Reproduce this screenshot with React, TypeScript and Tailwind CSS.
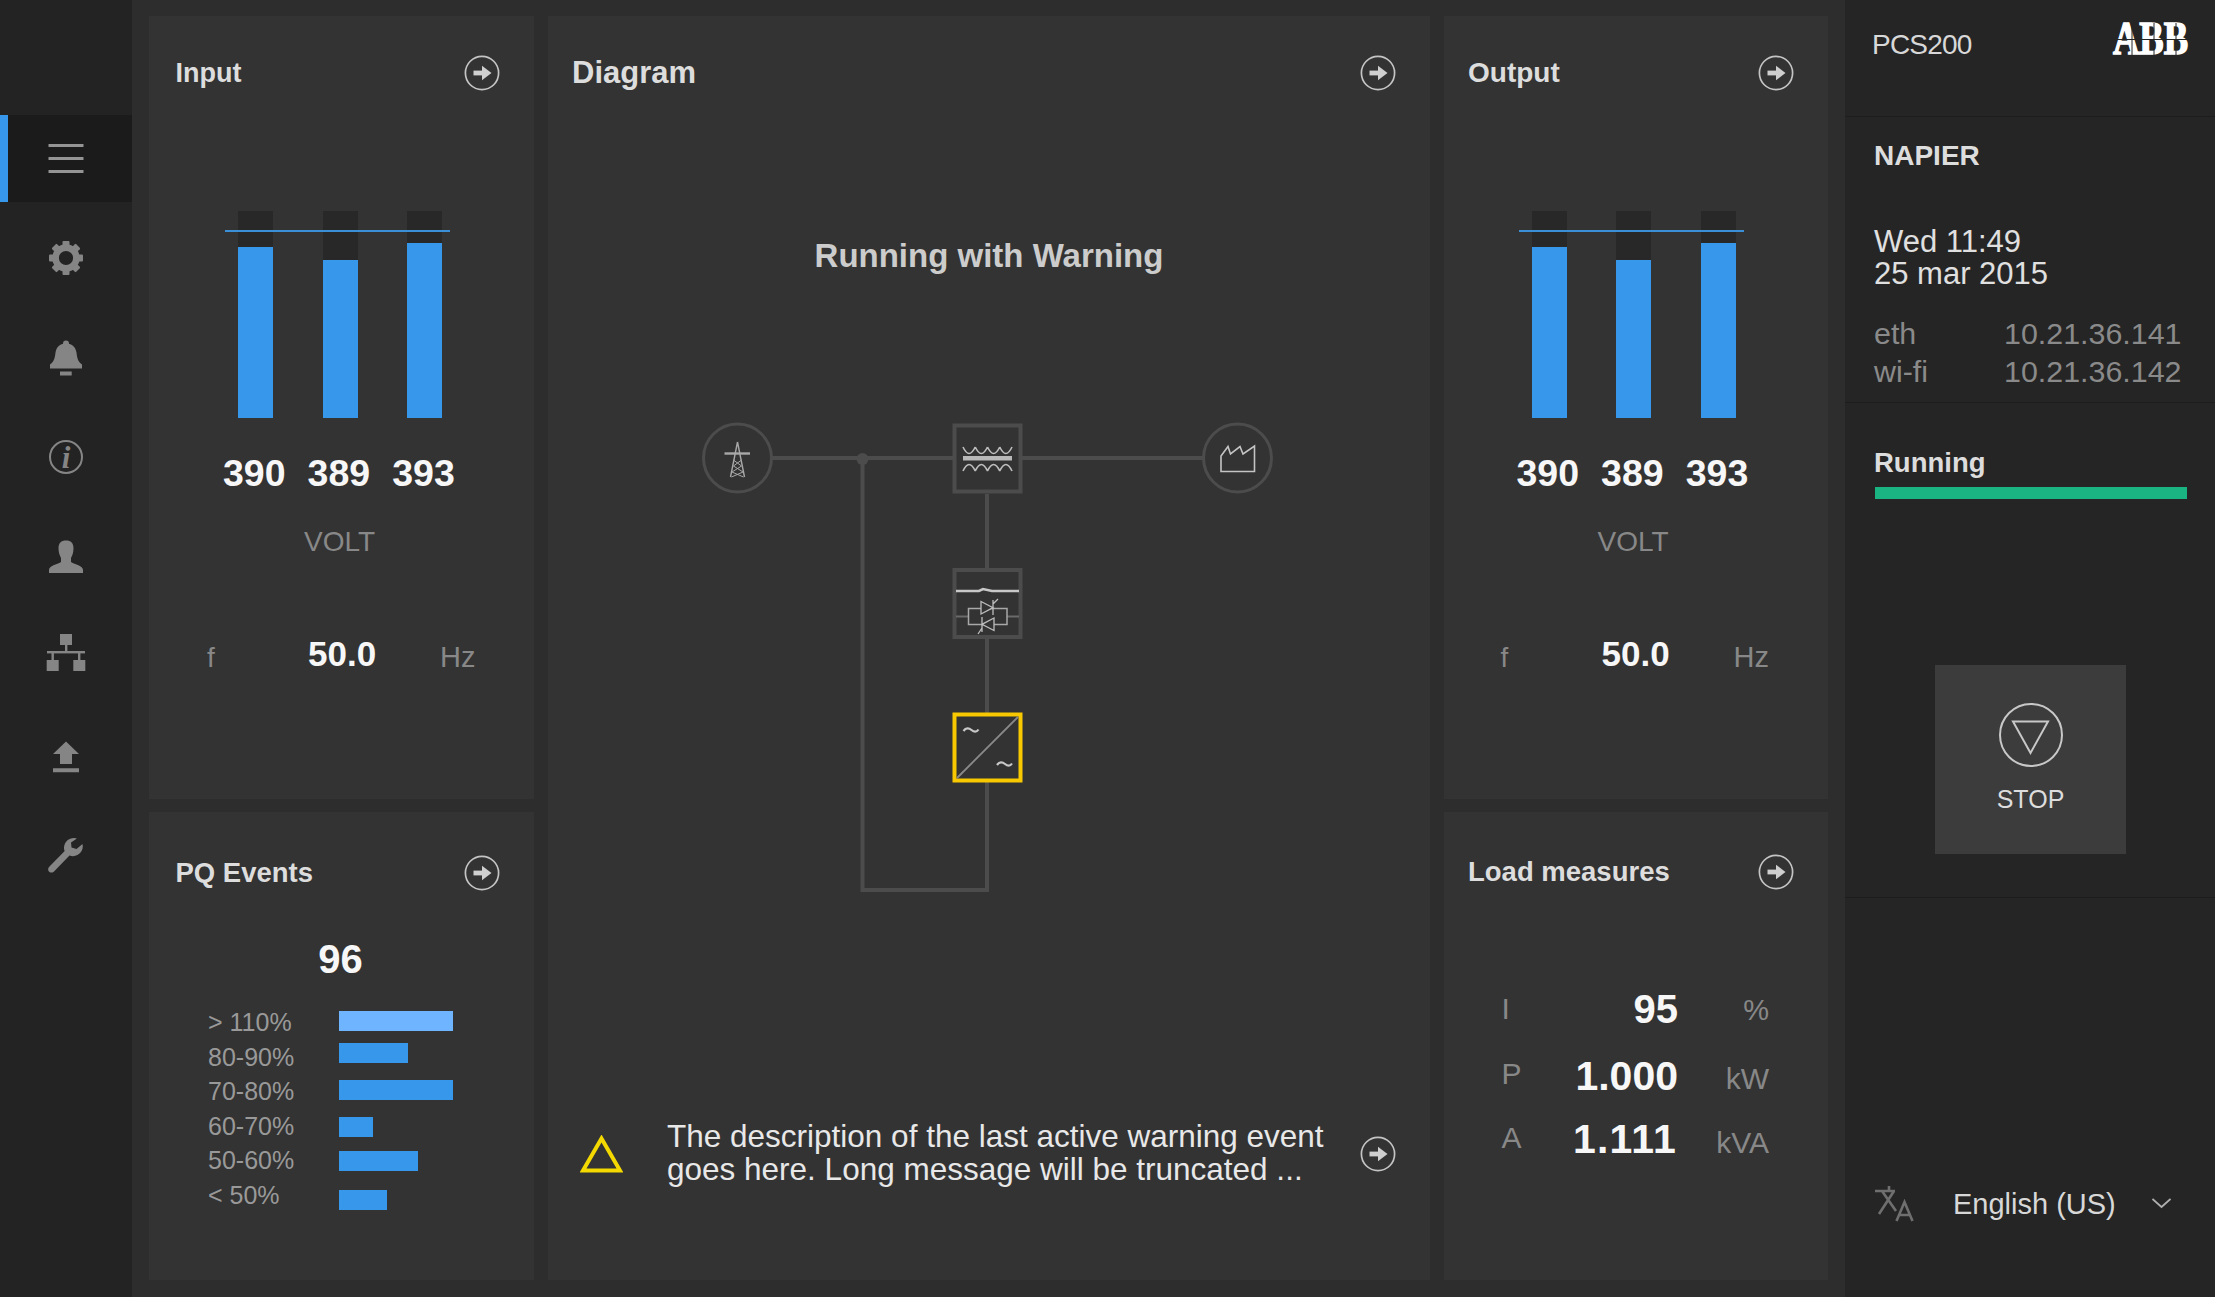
import React from "react";

function ArrowIcon() {
  return (
    <svg width="36" height="36" viewBox="0 0 36 36" className="shrink-0">
      <circle cx="18" cy="18" r="16.6" fill="none" stroke="#c4c4c4" strokeWidth="1.7" />
      <rect x="9.5" y="15.6" width="9" height="4.8" fill="#cfcfcf" />
      <polygon points="18,10.8 27.5,18 18,25.2" fill="#cfcfcf" />
    </svg>
  );
}

function Panel({ title, titleClass, children, className }: { title: string; titleClass: string; children: React.ReactNode; className: string }) {
  return (
    <section className={"flex flex-col bg-[#333333] " + className}>
      <header className="flex items-center justify-between pr-[34px] h-9 shrink-0">
        <h2 className={"font-bold text-[#dddddd] leading-9 " + titleClass}>{title}</h2>
        <ArrowIcon />
      </header>
      {children}
    </section>
  );
}

function Voltage({ className }: { className: string }) {
  const bars = [171, 158, 175];
  const values = ["390", "389", "393"];
  return (
    <div className={"flex flex-col " + className}>
      <div className="relative mt-[120px] ml-[89px] w-[204px] h-[207px] flex gap-[49.5px]">
        {bars.map((h, i) => (
          <div key={i} className="w-[35px] h-full bg-[#282828] flex flex-col justify-end">
            <div className="bg-[#3797ea] w-full" style={{ height: h }} />
          </div>
        ))}
        <div className="absolute left-[-13px] top-[19px] w-[225px] h-[2px] bg-[#3b8fd6]" />
      </div>
      <div className="flex ml-[63px] mt-[35px]">
        {values.map((v) => (
          <div key={v} className="w-[84.6px] text-center text-[37.5px] leading-10 font-bold text-[#f7f7f7]">{v}</div>
        ))}
      </div>
      <div className="ml-[63px] w-[255px] mt-[33px] text-center text-[28px] leading-8 text-[#888888]">VOLT</div>
      <div className="flex items-baseline ml-[58px] mt-[81px] leading-8">
        <span className="w-[101px] text-[28px] text-[#888888]">f</span>
        <span className="w-[132px] text-[35px] font-bold text-[#f7f7f7] -translate-y-px">50.0</span>
        <span className="text-[29px] text-[#888888]">Hz</span>
      </div>
    </div>
  );
}

const pqRows = [
  { label: "> 110%", w: "w-[114px]", mt: "mt-0", color: "bg-[#6eb4ff]" },
  { label: "80-90%", w: "w-[69px]", mt: "mt-[12px]", color: "bg-[#3797ea]" },
  { label: "70-80%", w: "w-[114px]", mt: "mt-[17px]", color: "bg-[#3797ea]" },
  { label: "60-70%", w: "w-[34px]", mt: "mt-[17px]", color: "bg-[#3797ea]" },
  { label: "50-60%", w: "w-[79px]", mt: "mt-[14px]", color: "bg-[#3797ea]" },
  { label: "< 50%", w: "w-[48px]", mt: "mt-[19px]", color: "bg-[#3797ea]" },
];

function Tower() {
  return (
    <g fill="none" stroke="#a8a8a8" strokeWidth="1.2">
      <path d="M724.5 453.5H750" strokeWidth="2.4" />
      <path d="M737.5 442L730.5 477M737.5 442L744.5 477" strokeWidth="1.4" />
      <path d="M733.5 460L741.5 466L732 472L743.5 477M741.5 460L733.5 466L743 472L731.5 477" strokeWidth="1" />
    </g>
  );
}

function Coils({ y, up }: { y: number; up: boolean }) {
  const xs = [963, 975.25, 987.5, 999.75];
  const d = xs.map((x) => `M${x} ${y}Q${x + 6.1} ${y + (up ? -13 : 13)} ${x + 12.25} ${y}`).join("");
  return <path d={d} fill="none" stroke="#bdbdbd" strokeWidth="1.6" />;
}

function Diagram() {
  const wire = "#4c4c4c";
  return (
    <svg width="580" height="475" viewBox="700 420 580 475" className="ml-[152px] mt-[144px] shrink-0">
      <g fill="none" stroke={wire} strokeWidth="4">
        <path d="M772 458H1203" />
        <path d="M862.5 458V890H987V494" />
      </g>
      <circle cx="862.5" cy="459" r="6" fill={wire} />
      <circle cx="737.5" cy="458" r="34" fill="#333333" stroke={wire} strokeWidth="3" />
      <circle cx="1237.5" cy="458" r="34" fill="#333333" stroke={wire} strokeWidth="3" />
      <Tower />
      <path d="M1221 471.5V456L1228 446.5L1230.5 454L1240 446.5L1243 454L1254.5 446V471.5Z" fill="none" stroke="#c4c4c4" strokeWidth="1.6" />

      <rect x="954.5" y="425.5" width="66" height="66" fill="#333333" stroke={wire} strokeWidth="4" />
      <Coils y={447} up={false} />
      <rect x="963" y="456" width="49" height="4.5" fill="#b8b8b8" />
      <Coils y={471} up={true} />

      <rect x="954.5" y="570" width="66" height="67" fill="#333333" stroke={wire} strokeWidth="4" />
      <path d="M956 591H979L983 589L992 591H1019" fill="none" stroke="#c8c8c8" strokeWidth="2.6" />
      <path d="M956 616.5H968M1007 616.5H1019" stroke="#6a6a6a" strokeWidth="2" />
      <rect x="968.5" y="608.5" width="38.5" height="16" fill="none" stroke="#a8a8a8" strokeWidth="1.5" />
      <path d="M981 601.5V614L993 607.7ZM993 600V615M993 604L998 599" fill="#333333" stroke="#bdbdbd" strokeWidth="1.3" />
      <path d="M994 618V630.5L982 624.3ZM982 617V632M982 628L978 634" fill="#333333" stroke="#bdbdbd" strokeWidth="1.3" />

      <rect x="954.5" y="714.5" width="66" height="66" fill="#333333" stroke="#f8c800" strokeWidth="4" />
      <path d="M957 778L1018 717" stroke="#8a8a8a" strokeWidth="1.8" />
      <path d="M963.5 731C966 727.5 969 728 971.5 730C974 732 976.5 732.5 978.5 729.5" fill="none" stroke="#c8c8c8" strokeWidth="2.2" />
      <path d="M997 765C999.5 761.5 1002.5 762 1005 764C1007.5 766 1010 766.5 1012 763.5" fill="none" stroke="#c8c8c8" strokeWidth="2.2" />
    </svg>
  );
}

const c = "#858585";
const navIcons: React.ReactNode[] = [
  <svg key="m" width="48" height="48" viewBox="42 134.5 48 48">
    <path d="M48.5 145H83.5M48.5 158H83.5M48.5 171H83.5" stroke="#949494" strokeWidth="3" />
  </svg>,
  <svg key="g" width="48" height="48" viewBox="42 234 48 48">
    <circle cx="66" cy="258" r="10.4" fill="none" stroke={c} strokeWidth="6.6" />
    <g fill={c}>
      {[0, 45, 90, 135, 180, 225, 270, 315].map((a) => (
        <rect key={a} x="62.5" y="241" width="7" height="6" rx="1" transform={`rotate(${a} 66 258)`} />
      ))}
    </g>
  </svg>,
  <svg key="b" width="48" height="48" viewBox="42 333.5 48 48">
    <g fill={c}>
      <circle cx="66" cy="343" r="3" />
      <path d="M50 364V368H82V364C77.5 361 77 356 76.5 352C75.5 346 71.5 343 66 343C60.5 343 56.5 346 55.5 352C55 356 54.5 361 50 364Z" />
      <rect x="60" y="371" width="11.7" height="4" />
    </g>
  </svg>,
  <svg key="i" width="48" height="48" viewBox="42 433 48 48">
    <circle cx="66" cy="457" r="16" fill="none" stroke={c} strokeWidth="2" />
    <text x="66" y="467.5" textAnchor="middle" fontFamily="'Liberation Serif', serif" fontStyle="italic" fontWeight="700" fontSize="31" fill={c}>i</text>
  </svg>,
  <svg key="u" width="48" height="48" viewBox="42 532.5 48 48">
    <path d="M58.5 548C58.5 542.5 61 540 66 540C71 540 73.5 542.5 73.5 548C73.5 552.5 72 555.5 71 557.5V561.5C75 564 83 565 83 569.5V572.5H49V569.5C49 565 57 564 61 561.5V557.5C60 555.5 58.5 552.5 58.5 548Z" fill={c} />
  </svg>,
  <svg key="s" width="48" height="48" viewBox="42 632 48 48">
    <g fill={c}>
      <rect x="60" y="634" width="12" height="11" />
      <rect x="46.7" y="660" width="12" height="11" />
      <rect x="73.3" y="660" width="12" height="11" />
      <rect x="47" y="651" width="38" height="2.4" />
      <rect x="65" y="645" width="2.4" height="7" />
      <rect x="51.5" y="652" width="2.4" height="9" />
      <rect x="78" y="652" width="2.4" height="9" />
    </g>
  </svg>,
  <svg key="up" width="48" height="48" viewBox="42 731.5 48 48">
    <path d="M66 741L79 753.5H72V763.5H60V753.5H53Z M53 767.7H79V771.7H53Z" fill={c} />
  </svg>,
  <svg key="w" width="48" height="48" viewBox="42 831 48 48">
    <path d="M77 838.5C71 836.5 64.5 840.5 64 847.5C64 849 64.2 850 64.7 851L49.5 866.5C47.5 868.5 48 871 49.5 872C51 873 53 872.8 54.5 871L69.5 855.5C70.5 856 72 856.2 73 856.2C79.5 856 84 850 82.5 844L76.5 849L71.5 847.5L71 842.5Z" fill={c} />
  </svg>,
];

export default function App() {
  return (
    <div className="flex w-[2215px] h-[1297px] overflow-hidden bg-[#2d2d2d] font-['Liberation_Sans',Arial,sans-serif]">
      <nav className="w-[132px] shrink-0 bg-[#232323] pt-[115px] flex flex-col gap-[12.5px]">
        {navIcons.map((icon, i) => (
          <div key={i} className={"relative h-[87px] flex items-center justify-center " + (i === 0 ? "bg-[#1b1b1b]" : "")}>
            {i === 0 && <span className="absolute left-0 top-0 bottom-0 w-2 bg-[#3797ea]" />}
            {icon}
          </div>
        ))}
      </nav>

      <main className="flex-1 flex gap-[14px] pl-[17px] pr-[17px] pt-4 pb-[17px]">
        <div className="w-[385px] flex flex-col gap-[13px]">
          <Panel title="Input" titleClass="text-[27px] ml-[26.5px]" className="h-[783px] pt-[39px]">
            <Voltage className="" />
          </Panel>
          <Panel title="PQ Events" titleClass="text-[27.5px] ml-[26.5px]" className="flex-1 pt-[43px]">
            <div className="mt-[44px] ml-[64px] w-[255px] text-center text-[40px] leading-[48px] font-bold text-[#f7f7f7]">96</div>
            <div className="flex mt-[22px] ml-[59px]">
              <div className="w-[130.6px] text-[25px] leading-[34.6px] text-[#999999]">
                {pqRows.map((r) => (
                  <div key={r.label}>{r.label}</div>
                ))}
              </div>
              <div className="pt-[6px]">
                {pqRows.map((r) => (
                  <div key={r.label} className={"h-5 " + r.w + " " + r.mt + " " + r.color} />
                ))}
              </div>
            </div>
          </Panel>
        </div>

        <Panel title="Diagram" titleClass="text-[31px] ml-6" className="w-[882px] pt-[39px] relative">
          <div className="mt-[145px] text-center text-[33px] leading-10 font-bold text-[#cccccc]">Running with Warning</div>
          <Diagram />
          <div className="mt-auto mb-[93px] flex items-center h-[66px] pl-8 pr-[34px]">
            <svg width="43" height="38" viewBox="0 0 43 38" className="shrink-0">
              <polygon points="21.5,3.5 40,35.5 3,35.5" fill="none" stroke="#f4d900" strokeWidth="4" />
            </svg>
            <p className="ml-[44px] -translate-y-[1.5px] text-[31.5px] leading-[33px] text-[#e8e8e8] whitespace-nowrap">
              The description of the last active warning event
              <br />
              goes here. Long message will be truncated ...
            </p>
            <div className="ml-auto">
              <ArrowIcon />
            </div>
          </div>
        </Panel>

        <div className="w-[384px] flex flex-col gap-[13px]">
          <Panel title="Output" titleClass="text-[28px] ml-6" className="h-[783px] pt-[39px]">
            <Voltage className="-ml-[1.5px]" />
          </Panel>
          <Panel title="Load measures" titleClass="text-[27.5px] ml-6" className="flex-1 pt-[42px]">
            <div className="mt-[97px] ml-[57.5px] w-[267.5px] flex flex-col gap-[19px]">
              <div className="flex items-baseline h-11 leading-[44px]">
                <span className="w-10 text-[30px] text-[#888888] -translate-y-[4px]">I</span>
                <span className="flex-1 text-right text-[40px] font-bold text-[#f7f7f7]">95</span>
                <span className="w-[91px] text-right text-[29px] text-[#888888] -translate-y-[3px]">%</span>
              </div>
              <div className="flex items-baseline h-11 leading-[44px] mt-[4px]">
                <span className="w-10 text-[30px] text-[#888888] -translate-y-[6px]">P</span>
                <span className="flex-1 text-right text-[41px] font-bold text-[#f7f7f7]">1.000</span>
                <span className="w-[91px] text-right text-[30px] text-[#888888] -translate-y-px">kW</span>
              </div>
              <div className="flex items-baseline h-11 leading-[44px]">
                <span className="w-10 text-[30px] text-[#888888] -translate-y-[5px]">A</span>
                <span className="flex-1 text-right text-[41px] font-bold tracking-[1.2px] pr-px text-[#f7f7f7]">1.111</span>
                <span className="w-[91px] text-right text-[30px] text-[#888888]">kVA</span>
              </div>
            </div>
          </Panel>
        </div>
      </main>

      <aside className="w-[370px] shrink-0 bg-[#252525] flex flex-col">
        <div className="h-[117px] border-b border-[#1d1d1d] flex justify-between pl-[27px] pr-[26px]">
          <div className="pt-[29px] text-[28px] leading-8 tracking-[-0.8px] text-[#d8d8d8]">PCS200</div>
          <svg width="77" height="54" viewBox="0 0 77 54" className="mt-3">
            <text transform="translate(1 42) scale(1 1.25)" x="0" y="0" fontFamily="'Liberation Serif', serif" fontWeight="700" fontSize="36.5" fill="#ffffff" stroke="#ffffff" strokeWidth="1.2">ABB</text>
            <path d="M0 27.5H77M20 11V43M42 11V43M64 11V43" stroke="#252525" strokeWidth="1" />
          </svg>
        </div>
        <div className="h-[286px] border-b border-[#1d1d1d] pl-[29px] pt-[23px]">
          <div className="text-[28px] leading-8 font-bold text-[#dddddd]">NAPIER</div>
          <div className="mt-[53.5px] text-[31px] leading-8 text-[#e0e0e0]">
            <div>Wed 11:49</div>
            <div>25 mar 2015</div>
          </div>
          <div className="mt-[25.5px] text-[30.4px] leading-[37.5px] text-[#8a8a8a]">
            <div className="flex">
              <span className="w-[130px]">eth</span>
              <span>10.21.36.141</span>
            </div>
            <div className="flex">
              <span className="w-[130px]">wi-fi</span>
              <span>10.21.36.142</span>
            </div>
          </div>
        </div>
        <div className="h-[495px] border-b border-[#1d1d1d] pt-[44px]">
          <div className="pl-[29px] text-[27.5px] leading-8 font-bold text-[#dddddd]">Running</div>
          <div className="ml-[30px] mt-2 w-[312px] h-[12px] bg-[#1ab483]" />
          <button className="mt-[166px] ml-[90px] w-[191px] h-[189px] bg-[#3c3c3c] flex flex-col items-center pt-[38px]">
            <svg width="64" height="64" viewBox="0 0 64 64">
              <circle cx="32" cy="32" r="31" fill="none" stroke="#c8c8c8" strokeWidth="2" />
              <polygon points="14,18.5 49,18.5 31.5,50" fill="none" stroke="#c8c8c8" strokeWidth="2" />
            </svg>
            <span className="mt-4 text-[25px] leading-8 text-[#dddddd]">STOP</span>
          </button>
        </div>
        <div className="flex-1 flex items-end pb-[73px] pl-[30px]">
          <div className="flex items-center h-10">
            <svg width="40" height="40" viewBox="1875 1185 40 40" className="shrink-0">
              <g fill="none" stroke="#6f6f6f" strokeWidth="2.6">
                <path d="M1875 1192H1895M1889 1187V1192M1882 1192L1896 1212M1894 1192L1879 1215" />
                <path d="M1896.5 1222L1904.5 1203L1912.5 1222M1899 1216H1910" />
              </g>
            </svg>
            <span className="ml-[38px] text-[29px] leading-10 text-[#d8d8d8]">English (US)</span>
            <svg width="19" height="12" viewBox="0 0 19 12" className="ml-9">
              <path d="M0.5 1L9.5 9L18.5 1" fill="none" stroke="#b0b0b0" strokeWidth="1.7" />
            </svg>
          </div>
        </div>
      </aside>
    </div>
  );
}
